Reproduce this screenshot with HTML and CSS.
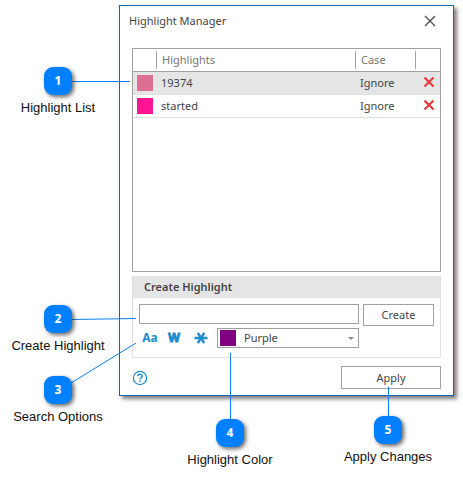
FILE: index.html
```html
<!DOCTYPE html>
<html lang="en">
<head>
  <meta charset="UTF-8">
  <meta name="viewport" content="width=device-width, initial-scale=1.0">
  <title>Highlight Manager</title>
  <link rel="stylesheet" href="styles.css">
</head>
<body>
  <div class="figure">
    <form class="dialog">
      <div class="titlebar">
        <h1>Highlight Manager</h1>
        <button type="button" class="close" aria-label="Close">
          <svg width="12" height="12" viewBox="0 0 12 12"><path d="M1 1 L11 11 M11 1 L1 11" stroke="#444" stroke-width="1.2" fill="none"/></svg>
        </button>
      </div>

      <div class="list">
        <table>
          <colgroup>
            <col class="col-color">
            <col>
            <col class="col-case">
            <col class="col-delete">
          </colgroup>
          <thead>
            <tr><th></th><th>Highlights</th><th>Case</th><th></th></tr>
          </thead>
          <tbody>
            <tr class="selected">
              <td><span class="swatch pale"></span></td>
              <td>19374</td>
              <td>Ignore</td>
              <td>
                <button type="button" class="delete" aria-label="Delete">
                  <svg width="12" height="12" viewBox="0 0 12 12"><path d="M1.5 1.5 L10.5 10.5 M10.5 1.5 L1.5 10.5" stroke="#e8383b" stroke-width="2.2" fill="none"/></svg>
                </button>
              </td>
            </tr>
            <tr>
              <td><span class="swatch pink"></span></td>
              <td>started</td>
              <td>Ignore</td>
              <td>
                <button type="button" class="delete" aria-label="Delete">
                  <svg width="12" height="12" viewBox="0 0 12 12"><path d="M1.5 1.5 L10.5 10.5 M10.5 1.5 L1.5 10.5" stroke="#e8383b" stroke-width="2.2" fill="none"/></svg>
                </button>
              </td>
            </tr>
          </tbody>
        </table>
      </div>

      <section class="create">
        <h2>Create Highlight</h2>
        <div class="create-body">
          <div class="fields">
            <input type="text" class="text" aria-label="Highlight text">
            <div class="options">
              <button type="button" class="option" aria-label="Match case">Aa</button>
              <button type="button" class="option word" aria-label="Whole word">W</button>
              <button type="button" class="option" aria-label="Wildcard">
                <svg width="14" height="12" viewBox="0 0 14 12"><path d="M0.5 6 H13.5 M3.8 0.8 L10.2 11.2 M10.2 0.8 L3.8 11.2" stroke="#1e8bcd" stroke-width="2.4" fill="none"/></svg>
              </button>
              <div class="color">
                <span class="swatch purple"></span>
                <select aria-label="Highlight color">
                  <option>Purple</option>
                </select>
                <svg class="arrow" width="6" height="3" viewBox="0 0 6 3"><path d="M0 0 H6 L3 3 Z" fill="#8a8a8a"/></svg>
              </div>
            </div>
          </div>
          <button type="button" class="btn">Create</button>
        </div>
      </section>

      <div class="footer">
        <button type="button" class="help" aria-label="Help">
          <svg width="16" height="16" viewBox="0 0 16 16" fill="none" stroke="#1e8bcd">
            <circle cx="8" cy="8" r="6.6" stroke-width="1.2"/>
            <path d="M5.9 6.3 C5.9 3.6 10.2 3.7 10.2 6.2 C10.2 7.7 8 7.8 8 9.6" stroke-width="1.5"/>
            <path d="M8 10.6 V12.1" stroke-width="1.5"/>
          </svg>
        </button>
        <button type="submit" class="btn apply">Apply</button>
      </div>
    </form>

    <!-- leader lines from the numbers to the controls -->
    <svg class="lines" width="463" height="484" viewBox="0 0 463 484" fill="none" stroke="#0a80f5">
      <path d="M72 81.5 H130"/>
      <path d="M72 319.5 L136 318.5"/>
      <path d="M71 383 L136 343"/>
      <path d="M230.5 353 V420"/>
      <path d="M388.5 387 V417"/>
    </svg>

    <div class="callout c1"><span class="num">1</span>Highlight List</div>
    <div class="callout c2"><span class="num">2</span>Create Highlight</div>
    <div class="callout c3"><span class="num">3</span>Search Options</div>
    <div class="callout c4"><span class="num">4</span>Highlight Color</div>
    <div class="callout c5"><span class="num">5</span>Apply Changes</div>
  </div>
</body>
</html>
```

FILE: styles.css
```css
* {
  box-sizing: border-box;
}

body {
  margin: 0;
  background: #fff;
  color: #444;
  font-family: "Noto Sans", "Open Sans", sans-serif;
  font-size: 11px;
  line-height: 18px;
}

h1, h2 {
  margin: 0;
  font-size: inherit;
}

button, input, select {
  margin: 0;
  padding: 0;
  border: 0;
  background: none;
  color: inherit;
  font: inherit;
}

svg {
  display: block;
}

.figure {
  position: relative;
  padding: 5px 9px 88px 119px;
}

.dialog {
  padding: 6px 12px;
  background: #fff;
  border: 1px solid #1464b4;
  box-shadow: 3px 3px 4px rgba(0, 0, 0, 0.5);
}

.titlebar {
  display: flex;
  justify-content: space-between;
  align-items: center;
  margin: 0 5px 18px -3px;
}

.titlebar h1 {
  font-weight: normal;
}

/* highlight list */
.list {
  height: 224px;
  border: 1px solid #a0a0a0;
}

table {
  width: 100%;
  table-layout: fixed;
  border-collapse: separate;
  border-spacing: 0;
}

.col-color {
  width: 23px;
}

.col-case {
  width: 60px;
}

.col-delete {
  width: 25px;
}

th {
  height: 23px;
  padding: 0 0 0 6px;
  border-bottom: 1px solid #a0a0a0;
  color: #777;
  font-weight: normal;
  text-align: left;
}

th + th {
  background: linear-gradient(#a0a0a0, #a0a0a0) 0 50% / 1px 18px no-repeat;
}

td {
  height: 23px;
  padding: 0 0 0 5px;
  border-bottom: 1px solid #e1e1e1;
}

td:first-child {
  padding-left: 4px;
}

td:last-child {
  padding-left: 8px;
}

.selected {
  background: #e5e5e5;
}

.swatch {
  display: block;
  width: 16px;
  height: 16px;
}

.pale {
  background: #db7093;
}

.pink {
  background: #ff1493;
}

.purple {
  background: #800080;
}

.delete {
  display: block;
  padding-bottom: 3px;
}

/* create highlight box */
.create {
  margin-top: 4px;
  border: 1px solid #e1e1e1;
}

.create h2 {
  padding: 1px 11px 2px;
  background: #e5e5e5;
  font-weight: 600;
}

.create-body {
  display: flex;
  align-items: flex-start;
  gap: 4px;
  padding: 6px 6px 9px;
}

.fields {
  flex: 1;
}

.text {
  display: block;
  width: 100%;
  height: 20px;
  padding: 0 4px;
  border: 1px solid #a0a0a0;
}

.options {
  display: flex;
  align-items: center;
  margin-top: 4px;
}

.option {
  display: flex;
  justify-content: center;
  width: 26px;
  color: #1e8bcd;
  font-size: 12px;
  font-weight: bold;
}

.option.word {
  -webkit-text-stroke: 1px #1e8bcd;
}

.option:first-child {
  width: 22px;
}

.option:nth-child(3) {
  width: 28px;
}

.color {
  position: relative;
  flex: 1;
  margin-left: 2px;
}

.color select {
  display: block;
  width: 100%;
  height: 20px;
  padding-left: 26px;
  border: 1px solid #a0a0a0;
  appearance: none;
}

.color .swatch {
  position: absolute;
  top: 2px;
  left: 3px;
}

.arrow {
  position: absolute;
  top: 9px;
  right: 5px;
  pointer-events: none;
}

.btn {
  width: 71px;
  height: 22px;
  border: 1px solid #a0a0a0;
  text-align: center;
}

.footer {
  display: flex;
  justify-content: space-between;
  align-items: center;
  margin-top: 8px;
}

.apply {
  width: 100px;
  height: 23px;
}

/* numbered callouts */
.lines {
  position: absolute;
  top: 0;
  left: 0;
  pointer-events: none;
}

.callout {
  position: absolute;
  display: flex;
  flex-direction: column;
  align-items: center;
  gap: 4px;
  width: 116px;
  color: #111;
  font-family: "Liberation Sans", Arial, sans-serif;
  font-size: 13px;
}

.num {
  width: 28px;
  height: 28px;
  border-radius: 9px;
  background: #0080ff;
  box-shadow: 2px 2px 4px rgba(0, 0, 0, 0.6);
  color: #fff;
  font-family: "Noto Sans", sans-serif;
  font-size: 12px;
  font-weight: bold;
  line-height: 28px;
  text-align: center;
}

.c1 {
  top: 67px;
  left: 0;
}

.c2 {
  top: 305px;
  left: 0;
}

.c3 {
  top: 376px;
  left: 0;
}

.c4 {
  top: 419px;
  left: 172px;
}

.c5 {
  top: 416px;
  left: 330px;
}
```
